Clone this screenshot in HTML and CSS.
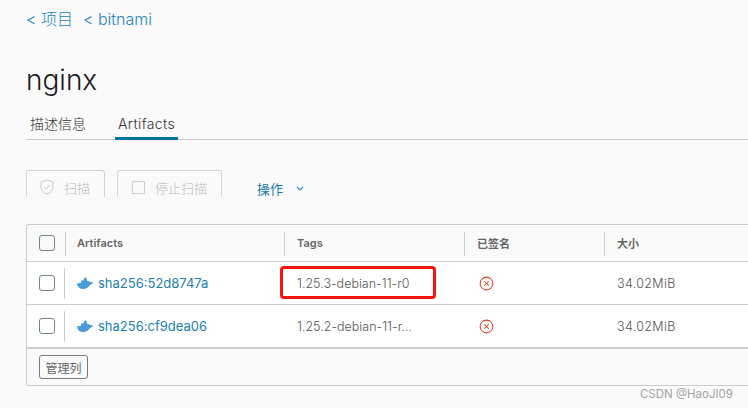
FILE: index.html
```html
<!DOCTYPE html>
<html lang="zh">
<head>
<meta charset="utf-8">
<title>nginx</title>
<link rel="stylesheet" href="styles.css">
</head>
<body>
<div class="page">
  <nav class="crumbs"><a>&lt; 项目</a><a>&lt; bitnami</a></nav>
  <h1 class="title">nginx</h1>
  <div class="tabs">
    <span class="tab tab-plain">描述信息</span>
    <span class="tab tab-active">Artifacts</span>
  </div>
  <div class="toolbar">
    <div class="btn btn-scan">
      <svg class="btn-icon" viewBox="0 0 14 16"><path d="M7 1 L13 3 V8 C13 11.500 10 14 7 15 C4 14 1 11.500 1 8 V3 Z M4.200 7.800 L6.300 10 L9.900 5.800" fill="none" stroke="#c9c9c9" stroke-width="1"/></svg>
      <span>扫描</span>
    </div>
    <div class="btn btn-stop">
      <span class="stop-box"></span>
      <span>停止扫描</span>
    </div>
    <div class="action">
      <span>操作</span>
      <svg class="chev" viewBox="0 0 8 5"><path d="M1 1 L4 4 L7 1" fill="none" stroke="#2f8fc0" stroke-width="1.200"/></svg>
    </div>
  </div>
  <div class="grid">
    <div class="row head">
      <div class="cell c-check"><span class="check check-head"></span></div>
      <div class="cell c-art"><span class="sep sep-art"></span>Artifacts</div>
      <div class="cell c-tags"><span class="sep"></span>Tags</div>
      <div class="cell c-sign"><span class="sep"></span>已签名</div>
      <div class="cell c-size"><span class="sep"></span>大小</div>
    </div>
    <div class="row body-row">
      <div class="cell c-check"><span class="check"></span></div>
      <div class="cell c-art"><span class="sep sep-row"></span>
        <svg class="whale" viewBox="0 0 16 12"><path d="M0 6.500 C1.500 6 3 6 4 6 L4 3.500 L6.500 3.500 L6.800 1.500 L9 0 L9.800 3 L11 4.600 C12 4 13 4.200 13.500 5.200 C14.400 5 15.300 5 16 5.500 C15 7 14 7.600 13 8 C11.500 10.800 9 12 6 12 C2.500 12 0.500 9.800 0 6.500 Z" fill="#4a9cd8"/></svg>
        <a class="link">sha256:52d8747a</a></div>
      <div class="cell c-tags tag-text">1.25.3-debian-11-r0<span class="mark"></span></div>
      <div class="cell c-sign"><svg class="err" viewBox="0 0 16 16"><circle cx="8" cy="8" r="6.800" fill="none" stroke="#d8402a" stroke-width="1.100"/><path d="M5.600 5.600 L10.400 10.400 M10.400 5.600 L5.600 10.400" stroke="#d8402a" stroke-width="1.100"/></svg></div>
      <div class="cell c-size">34.02MiB</div>
    </div>
    <div class="row body-row body-last">
      <div class="cell c-check"><span class="check"></span></div>
      <div class="cell c-art"><span class="sep sep-row"></span>
        <svg class="whale" viewBox="0 0 16 12"><path d="M0 6.500 C1.500 6 3 6 4 6 L4 3.500 L6.500 3.500 L6.800 1.500 L9 0 L9.800 3 L11 4.600 C12 4 13 4.200 13.500 5.200 C14.400 5 15.300 5 16 5.500 C15 7 14 7.600 13 8 C11.500 10.800 9 12 6 12 C2.500 12 0.500 9.800 0 6.500 Z" fill="#4a9cd8"/></svg>
        <a class="link">sha256:cf9dea06</a></div>
      <div class="cell c-tags tag-text">1.25.2-debian-11-r...</div>
      <div class="cell c-sign"><svg class="err" viewBox="0 0 16 16"><circle cx="8" cy="8" r="6.800" fill="none" stroke="#d8402a" stroke-width="1.100"/><path d="M5.600 5.600 L10.400 10.400 M10.400 5.600 L5.600 10.400" stroke="#d8402a" stroke-width="1.100"/></svg></div>
      <div class="cell c-size">34.02MiB</div>
    </div>
    <div class="foot"><span class="manage">管理列</span></div>
  </div>
  <div class="watermark">CSDN @HaoJI09</div>
</div>
</body>
</html>
```
FILE: styles.css
```css
* { box-sizing: border-box; }
html, body { margin: 0; height: 100%; }
body {
  background: #fafafa;
  font-family: Inter, "Noto Sans CJK SC", sans-serif;
  color: #565656;
  overflow: hidden;
}
.page { position: relative; width: 748px; height: 408px; padding: 9px 0 0 26px; overflow: hidden; }
.crumbs { display: flex; gap: 10px; height: 20px; line-height: 20px; font-size: 16px; font-weight: 300; color: #2283bf; }
.title { margin: 31px 0 0; font-size: 28px; font-weight: 300; line-height: 40px; height: 40px; color: #1b1b1b; }
.tabs { display: flex; margin-top: 15px; height: 25px; width: 722px; border-bottom: 1px solid #ccc; }
.tab { font-size: 14px; font-weight: 300; line-height: 17px; color: #333; }
.tab-plain { margin-left: 4px; width: 85px; }
.tab-active { position: relative; width: 63px; padding-left: 3px; letter-spacing: 0.400px; }
.tab-active::after { content: ""; position: absolute; left: 0; right: 0; top: 22px; height: 3px; background: #0072a3; }
.toolbar { display: flex; margin-top: 30px; height: 28px; align-items: flex-start; font-size: 13px; font-weight: 300; }
.btn { height: 27px; border: 1px solid #d2d2d2; border-bottom: 0; border-radius: 3px 3px 0 0; display: flex; align-items: center; color: #bdbdbd; padding-top: 6px; }
.btn-scan { width: 79px; padding-left: 13px; gap: 10px; }
.btn-stop { width: 105px; margin-left: 12px; padding-left: 14px; gap: 10px; }
.btn-icon { width: 14px; height: 16px; }
.stop-box { width: 13px; height: 13px; border: 1px solid #cfcfcf; }
.action { display: flex; align-items: center; margin-left: 35px; height: 27px; padding-top: 9px; gap: 13px; color: #1b77ad; font-weight: 400; }
.chev { width: 8px; height: 5px; }
.grid { margin-top: 26px; width: 740px; height: 162px; border: 1px solid #ccc; border-right: 0; border-radius: 3px 0 0 3px; background: #fafafa; }
.row { display: flex; }
.head { height: 37px; border-bottom: 1px solid #ccc; font-size: 11px; font-weight: 600; color: #666; }
.body-row { height: 43px; background: #fff; border-bottom: 1px solid #ccc; font-size: 12.500px; font-weight: 300; color: #555; }
.body-last { border-bottom: 2px solid #ccc; height: 44px; }
.cell { display: flex; align-items: center; position: relative; height: 100%; }
.c-check { width: 38px; padding-left: 12px; }
.c-art { width: 219px; padding-left: 12px; }
.c-tags { width: 180px; padding-left: 13px; }
.c-sign { width: 140px; padding-left: 13px; }
.body-row .c-sign { padding-left: 15px; }
.c-size { flex: 1; padding-left: 13px; }
.body-row .c-size { letter-spacing: 0.350px; }
.sep { position: absolute; left: 0; top: 7px; bottom: 5px; width: 1px; background: #ccc; }
.sep-row { left: -1px; top: 6px; bottom: 5px; }
.check { width: 16px; height: 16px; border: 1px solid #6f8491; border-radius: 3px; background: #fff; }
.check-head { background: transparent; }
.whale { width: 16px; height: 12px; margin-right: 5px; }
.link { color: #1b7fb3; font-size: 13px; font-weight: 400; }
.mark { position: absolute; left: -4px; top: 4px; width: 156px; height: 33px; border: 3px solid #f5130c; border-radius: 4px; }
.err { width: 15px; height: 15px; }
.foot { padding: 6px 0 0 12px; }
.manage { display: inline-flex; align-items: center; justify-content: center; width: 49px; height: 24px; border: 1px solid #7a7a7a; border-radius: 3px; font-size: 12px; color: #666; background: #fafafa; }
.watermark { position: absolute; right: 15px; bottom: 7px; font-size: 11.500px; color: #a3a3a3; }
```
